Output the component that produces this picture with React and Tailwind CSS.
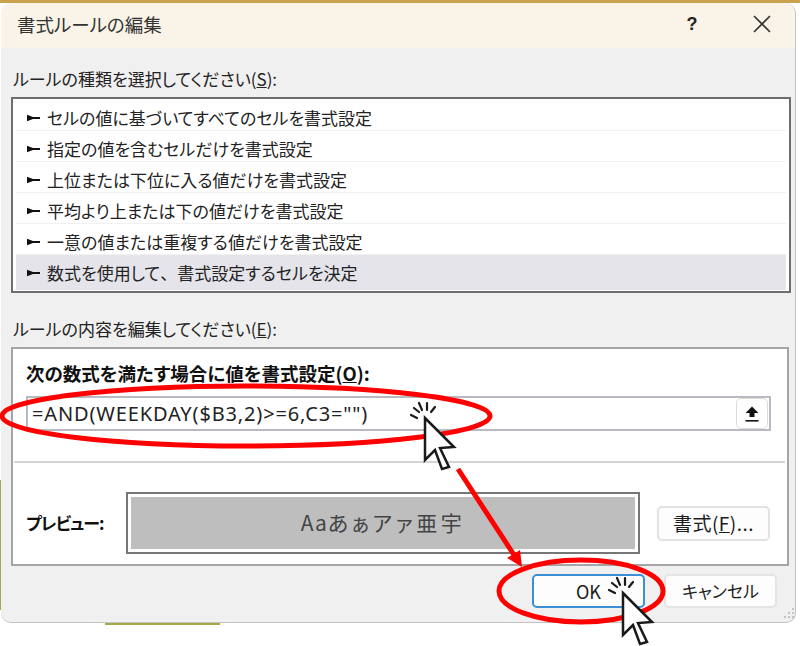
const font = { fontFamily: '"Noto Sans CJK JP", "Noto Sans", sans-serif', fontFeatureSettings: '"palt"' };

const rows = [
  "セルの値に基づいてすべてのセルを書式設定",
  "指定の値を含むセルだけを書式設定",
  "上位または下位に入る値だけを書式設定",
  "平均より上または下の値だけを書式設定",
  "一意の値または重複する値だけを書式設定",
];

function Marker() {
  return (
    <svg width="14" height="8" viewBox="0 0 14 8" className="shrink-0">
      <path d="M0 0.8 L6 3 L13 3 L13 5 L6 5 L0 7.2 Z" fill="#111" />
    </svg>
  );
}

function Row({ text, selected }) {
  return (
    <div
      className={
        selected
          ? "h-[35px] flex items-center pl-[11px] gap-[6px] bg-[#e4e4ea]"
          : "h-[31px] pt-[5px] flex items-center pl-[11px] gap-[6px] border-b border-[#f1f1f1]"
      }
    >
      <Marker />
      <span className="text-[17px] leading-[24px] text-[#222] whitespace-nowrap">{text}</span>
    </div>
  );
}

function Btn({ className, children }) {
  return (
    <div className={"flex items-center justify-center bg-[#fdfdfd] rounded-[5px] leading-[24px] text-[#1c1c1c] " + className}>
      {children}
    </div>
  );
}

function Cursor({ x, y }) {
  return (
    <g transform={`translate(${x} ${y})`}>
      <path
        d="M0 0 L29 29 L15 30 L24 49 L17 51 L10 32 L0 42 Z"
        fill="#fff"
        stroke="#1a1a1a"
        strokeWidth="2.5"
        strokeLinejoin="miter"
      />
      <g stroke="#1a1a1a" strokeWidth="2.2" strokeLinecap="round">
        <path d="M-14 -3 L-8 0" />
        <path d="M-11 -10 L-6 -6" />
        <path d="M-6 -15 L-3 -8" />
        <path d="M2 -15 L2 -8" />
        <path d="M10 -11 L6 -6" />
      </g>
    </g>
  );
}

export default function App() {
  return (
    <div className="relative w-[800px] h-[646px] bg-white overflow-hidden" style={font}>
      <div className="h-[3px] bg-[#c9a24e]" />
      <div className="ml-[1px] w-[795px] h-[620px] rounded-[10px] bg-[#f0f0f0] border-r border-b border-[#c4c4c4] relative">
        {/* title bar */}
        <div className="h-[45px] bg-[#faf3e8] rounded-t-[10px] flex items-center pl-[16px] pb-[3px]">
          <span className="text-[18.5px] leading-[24px] text-[#333] flex-1">書式ルールの編集</span>
          <span className="text-[18px] font-bold text-[#222] w-[20px] text-center mr-[51px]" style={{ fontFamily: '"Liberation Sans", sans-serif' }}>?</span>
          <svg width="18" height="18" viewBox="0 0 18 18" className="mr-[24px]">
            <path d="M1 1 L17 17 M17 1 L1 17" stroke="#333" strokeWidth="1.6" />
          </svg>
        </div>

        {/* body */}
        <div className="pt-[19px] pl-[10px]">
          <div className="pl-[2px] text-[17px] leading-[24px] text-[#222] whitespace-nowrap">
            ルールの種類を選択してください(<span className="underline">S</span>):
          </div>
          <div className="mt-[6px] w-[780px] h-[196px] border-2 border-[#6e6e70] bg-white px-[3px] pt-[1px]">
            {rows.map((t) => (
              <Row key={t} text={t} />
            ))}
            <Row
              text={
                <>
                  数式を使用して<span className="[font-feature-settings:normal]">、</span>書式設定するセルを決定
                </>
              }
              selected
            />
          </div>

          <div className="mt-[24px] pl-[2px] text-[17px] leading-[24px] text-[#222] whitespace-nowrap">
            ルールの内容を編集してください(<span className="underline">E</span>):
          </div>

          <div className="mt-[6px] w-[778px] h-[219px] border-2 border-[#a5a5a8] bg-white">
            <div className="pt-[12px] pl-[13px] text-[18.5px] leading-[24px] font-bold text-[#111] whitespace-nowrap">
              次の数式を満たす場合に値を書式設定(<span className="underline">O</span>):
            </div>
            <div className="mt-[11px] ml-[13px] w-[745px] h-[35px] border-2 border-[#b9b9c2] flex items-center justify-between pl-[4px] pr-[1px]">
              <span className="text-[20px] leading-[24px] text-[#222] whitespace-nowrap tracking-[0.85px]" style={{ fontFamily: '"Noto Sans", sans-serif' }}>
                =AND(WEEKDAY($B3,2)&gt;=6,C3="")
              </span>
              <div className="w-[32px] h-[31px] rounded-[5px] border border-[#dcdcdc] bg-white flex items-center justify-center">
                <svg width="14" height="16" viewBox="0 0 14 16">
                  <path d="M7 0.5 L13.5 7 L9.5 7 L9.5 11 L4.5 11 L4.5 7 L0.5 7 Z" fill="#111" />
                  <rect x="0.5" y="14" width="13" height="1.6" fill="#111" />
                </svg>
              </div>
            </div>
            <div className="mt-[30px] h-[2px] bg-[#d4d4d4] ml-px mr-[2px]" />
            <div className="mt-[29px] ml-[13px] flex items-center">
              <span className="w-[100px] text-[17px] leading-[24px] font-bold text-[#111] tracking-[-1px] whitespace-nowrap">プレビュー:</span>
              <div className="w-[514px] h-[62px] border-2 border-[#777] bg-white p-[3px]">
                <div className="h-full bg-[#bebebe] flex items-center justify-center text-[21px] text-[#444]">
                  <span className="tracking-[1px]">Aa</span>
                  <span className="tracking-[3.5px]">あぁアァ亜宇</span>
                </div>
              </div>
              <Btn className="ml-[17px] w-[113px] h-[35px] border-2 border-[#e2e2e2] text-[19px] tracking-[0.5px]">
                書式(<span className="underline">F</span>)...
              </Btn>
            </div>
          </div>
        </div>

        {/* footer */}
        <div className="mt-[8px] pr-[18px] flex justify-end gap-[19px]">
          <Btn className="w-[113px] h-[34px] border-2 border-[#3b8fd6] text-[18px]">OK</Btn>
          <Btn className="w-[113px] h-[34px] border-2 border-[#e4e4e4] text-[17px]">キャンセル</Btn>
        </div>
      </div>

      {/* annotations lying over the dialog */}
      <svg className="absolute inset-0 pointer-events-none" width="800" height="646" viewBox="0 0 800 646">
        <rect x="0" y="480" width="1" height="130" fill="#a8a848" />
        <rect x="105" y="623" width="115" height="2" fill="#a8a848" />
        <g fill="none" stroke="#f00" strokeWidth="5">
          <ellipse cx="246" cy="416" rx="244" ry="30" />
          <ellipse cx="581" cy="591" rx="82" ry="31" />
          <path d="M458 469 L516 558" />
        </g>
        <path d="M522 567 L507 558 L520 550 Z" fill="#f00" />
        <Cursor x={425} y={418} />
        <Cursor x={623} y={593} />
        <g fill="#c4c4c4">
          <rect x="792" y="608" width="2" height="2" />
          <rect x="788" y="612" width="2" height="2" />
          <rect x="792" y="612" width="2" height="2" />
          <rect x="784" y="616" width="2" height="2" />
          <rect x="788" y="616" width="2" height="2" />
          <rect x="792" y="616" width="2" height="2" />
        </g>
      </svg>
    </div>
  );
}
